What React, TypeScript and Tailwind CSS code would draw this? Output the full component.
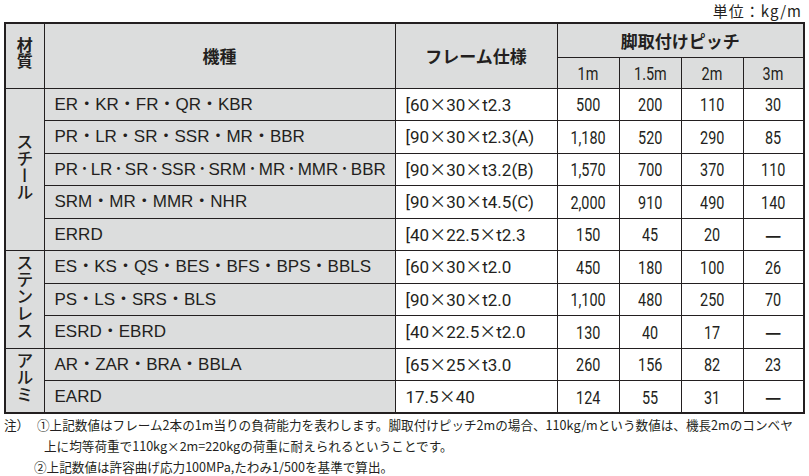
const groups = [
  {
    name: 'スチール',
    rows: [
      { model: ['ER', 'KR', 'FR', 'QR', 'KBR'], frame: '[60×30×t2.3', v: ['500', '200', '110', '30'] },
      { model: ['PR', 'LR', 'SR', 'SSR', 'MR', 'BBR'], frame: '[90×30×t2.3(A)', v: ['1,180', '520', '290', '85'] },
      { model: ['PR', 'LR', 'SR', 'SSR', 'SRM', 'MR', 'MMR', 'BBR'], tight: true, frame: '[90×30×t3.2(B)', v: ['1,570', '700', '370', '110'] },
      { model: ['SRM', 'MR', 'MMR', 'NHR'], frame: '[90×30×t4.5(C)', v: ['2,000', '910', '490', '140'] },
      { model: ['ERRD'], frame: '[40×22.5×t2.3', v: ['150', '45', '20', '—'] },
    ],
  },
  {
    name: 'ステンレス',
    rows: [
      { model: ['ES', 'KS', 'QS', 'BES', 'BFS', 'BPS', 'BBLS'], frame: '[60×30×t2.0', v: ['450', '180', '100', '26'] },
      { model: ['PS', 'LS', 'SRS', 'BLS'], frame: '[90×30×t2.0', v: ['1,100', '480', '250', '70'] },
      { model: ['ESRD', 'EBRD'], frame: '[40×22.5×t2.0', v: ['130', '40', '17', '—'] },
    ],
  },
  {
    name: 'アルミ',
    rows: [
      { model: ['AR', 'ZAR', 'BRA', 'BBLA'], frame: '[65×25×t3.0', v: ['260', '156', '82', '23'] },
      { model: ['EARD'], frame: '17.5×40', v: ['124', '55', '31', '—'] },
    ],
  },
]

const jp = "font-['Noto_Sans_CJK_JP',sans-serif]"
const latin = "font-['Liberation_Sans','Noto_Sans_CJK_JP',sans-serif]"
const roboto = "font-['Roboto',sans-serif]"
const cond = `inline-block scale-x-[0.8] ${roboto}`
const cell = 'border border-[#231f20]'
const gray = 'bg-[#dcdddd]'

function Model({ parts, tight }: { parts: string[]; tight?: boolean }) {
  return (
    <span className="whitespace-nowrap">
      {parts.map((p, i) => (
        <span key={i}>
          {i > 0 && (tight ? <span className="mx-[2px]">･</span> : <span>・</span>)}
          {p}
        </span>
      ))}
    </span>
  )
}

// condensed digits, like the printed table
function Num({ t }: { t: string }) {
  if (t === '—') return <span className={`${jp} font-bold`}>—</span>
  return <span className={cond}>{t}</span>
}

function Frame({ t }: { t: string }) {
  const parts = t.split('×')
  return (
    <span className={`${roboto} whitespace-nowrap`}>
      {parts.map((p, i) => (
        <span key={i}>
          {i > 0 && <span className={jp}>×</span>}
          {p}
        </span>
      ))}
    </span>
  )
}

export default function App() {
  return (
    <div className={`w-[809px] h-[476px] bg-white text-[#231f20] ${jp}`}>
      <div className="h-[22px] flex items-center justify-end pr-[7px] text-[15px] tracking-[1px]">
        単位：kg/m
      </div>

      <div className="pl-[4px]">
        <table className="w-[799px] table-fixed border-collapse border-2 border-[#231f20]">
          <colgroup>
            <col className="w-[39px]" />
            <col className="w-[351px]" />
            <col className="w-[162px]" />
            <col className="w-[62px]" />
            <col className="w-[62px]" />
            <col className="w-[62px]" />
            <col className="w-[61px]" />
          </colgroup>
          <thead className="text-[17px] font-medium">
            <tr className="h-[34px]">
              <th rowSpan={2} className={`${cell} ${gray} p-0`}>
                <span className="inline-block [writing-mode:vertical-rl] leading-[16px] text-[16px]">材質</span>
              </th>
              <th rowSpan={2} className={`${cell} ${gray}`}>機種</th>
              <th rowSpan={2} className={`${cell} ${gray}`}>フレーム仕様</th>
              <th colSpan={4} className={`${cell} ${gray}`}>脚取付けピッチ</th>
            </tr>
            <tr className="h-[31px]">
              {['1m', '1.5m', '2m', '3m'].map((m) => (
                <th key={m} className={`${cell} ${gray} font-normal text-[18px]`}>
                  <span className={cond}>{m}</span>
                </th>
              ))}
            </tr>
          </thead>
          <tbody>
            {groups.map((g) =>
              g.rows.map((r, i) => (
                <tr key={g.name + i} className="h-[32.5px]">
                  {i === 0 && (
                    <td rowSpan={g.rows.length} className={`${cell} ${gray} p-0 text-center`}>
                      <span className="inline-block [writing-mode:vertical-rl] text-[17px] leading-[17px] font-medium">
                        {g.name}
                      </span>
                    </td>
                  )}
                  <td className={`${cell} ${gray} pl-[10px] text-[17px] ${latin}`}>
                    <Model parts={r.model} tight={r.tight} />
                  </td>
                  <td className={`${cell} pl-[10px] text-[17px]`}>
                    <Frame t={r.frame} />
                  </td>
                  {r.v.map((n, k) => (
                    <td key={k} className={`${cell} text-center text-[18px]`}>
                      <Num t={n} />
                    </td>
                  ))}
                </tr>
              ))
            )}
          </tbody>
        </table>
      </div>

      <div className="text-[12.6px] leading-[21px] whitespace-nowrap">
        <div className="flex pl-[4px]">
          <span className="w-[33px] shrink-0">注）</span>
          <span>①上記数値はフレーム2本の1m当りの負荷能力を表わします。脚取付けピッチ2mの場合、110kg/mという数値は、機長2mのコンベヤ</span>
        </div>
        <div className="pl-[44px]">上に均等荷重で110kg×2m=220kgの荷重に耐えられるということです。</div>
        <div className="pl-[34px]">②上記数値は許容曲げ応力100MPa,たわみ1/500を基準で算出。</div>
      </div>
    </div>
  )
}
